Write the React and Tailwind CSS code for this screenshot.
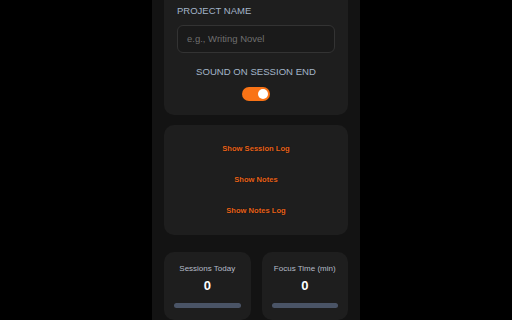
import { useState } from 'react';

function Toggle({ on, onChange }) {
  return (
    <button
      onClick={() => onChange(!on)}
      className={`relative w-[28px] h-[14px] rounded-full transition-colors ${on ? 'bg-[#f97316]' : 'bg-[#444]'}`}
    >
      <span
        className={`absolute top-[2px] w-[10px] h-[10px] rounded-full bg-white transition-all ${on ? 'left-[16px]' : 'left-[2px]'}`}
      />
    </button>
  );
}

function StatCard({ label, value }) {
  return (
    <div className="flex-1 bg-[#1e1e1e] rounded-[10px] pt-[11px] pb-[12px] px-[10px] flex flex-col items-center">
      <div className="text-[8px] leading-[12px] text-[#b4bcc8]">{label}</div>
      <div className="mt-[4px] text-[13px] leading-[14px] font-bold text-white">{value}</div>
      <div className="mt-[10px] w-full h-[5px] rounded-full bg-[#4a5466]" />
    </div>
  );
}

export default function App() {
  const [sound, setSound] = useState(true);
  const links = ['Show Session Log', 'Show Notes', 'Show Notes Log'];

  return (
    <div className="w-[512px] h-[320px] overflow-hidden bg-black" style={{ fontFamily: '"Liberation Sans", Arial, sans-serif' }}>
      <div className="w-[208px] h-full mx-auto bg-[#131313] px-[12px] flex flex-col">
        <div className="-mt-[16px] bg-[#1e1e1e] rounded-[10px] pt-[21px] pb-[14px] px-[13px] flex flex-col">
          <div className="text-[9.5px] leading-[12px] text-[#a3b5c9]">PROJECT NAME</div>
          <div className="mt-[8px] h-[28px] rounded-[6px] border border-[#333] bg-[#1a1a1a] flex items-center px-[9px]">
            <span className="text-[9.5px] text-[#6f6f6f]">e.g., Writing Novel</span>
          </div>
          <div className="mt-[13px] text-center text-[9.6px] leading-[12px] text-[#a3b5c9]">SOUND ON SESSION END</div>
          <div className="mt-[9px] flex justify-center">
            <Toggle on={sound} onChange={setSound} />
          </div>
        </div>

        <div className="mt-[10px] h-[110px] bg-[#1e1e1e] rounded-[10px] flex flex-col items-center justify-center gap-[19px]">
          {links.map(l => (
            <div
              key={l}
              className="text-[7.6px] leading-[12px] font-bold text-[#e8641e] cursor-pointer"
              style={{ textShadow: '0 0 1px #000' }}
            >
              {l}
            </div>
          ))}
        </div>

        <div className="mt-[17px] flex gap-[11px]">
          <StatCard label="Sessions Today" value="0" />
          <StatCard label="Focus Time (min)" value="0" />
        </div>
      </div>
    </div>
  );
}
